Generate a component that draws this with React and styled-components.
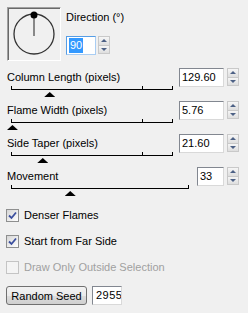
import React from 'react'
import styled, { createGlobalStyle } from 'styled-components'

const GlobalStyle = createGlobalStyle`
  html, body {
    margin: 0;
    padding: 0;
    background: #f0f0f0;
  }
  body {
    font-family: 'Liberation Sans', Arial, sans-serif;
    font-size: 11px;
    color: #000;
  }
`

const Panel = styled.div`
  width: 248px;
  height: 313px;
  box-sizing: border-box;
  padding: 7px 9px 0 7px;
  display: flex;
  flex-direction: column;
  overflow: hidden;
`

const DirectionRow = styled.div`
  display: flex;
  align-items: flex-start;
  gap: 5px;
`

const DialBox = styled.div`
  width: 54px;
  height: 54px;
  box-sizing: border-box;
  border-style: solid;
  border-width: 1px;
  border-color: #a0a0a0 #ffffff #ffffff #a0a0a0;
  box-shadow: inset 1px 1px 0 #696969;
  display: flex;
  align-items: center;
  justify-content: center;
`

const DirectionControls = styled.div`
  display: flex;
  flex-direction: column;
  padding-top: 4px;
`

const Label = styled.div`
  height: 13px;
  line-height: 13px;
  white-space: nowrap;
  color: ${({ $disabled }) => ($disabled ? '#a0a0a0' : '#000')};
`

const SpinGroup = styled.div`
  display: flex;
  align-items: flex-start;
  gap: ${({ $gap }) => $gap || 3}px;
  margin-top: ${({ $offset }) => $offset || 0}px;
`

const NumberBox = styled.div`
  width: ${({ $width }) => $width}px;
  height: 19px;
  box-sizing: border-box;
  background: #fff;
  border: 1px solid;
  border-color: ${({ $focused }) =>
    $focused ? '#569de5 #a9cdf3 #a9cdf3 #569de5' : '#828790 #d9d9d9 #d9d9d9 #828790'};
  padding: 0 0 0 ${({ $indent }) => $indent || 2}px;
  letter-spacing: ${({ $spacing }) => $spacing || 0}px;
  line-height: 17px;
  white-space: nowrap;
  overflow: hidden;
`

const Selection = styled.span`
  display: inline-block;
  background: #3399ff;
  color: #fff;
  line-height: 15px;
  padding: 0 1px;
  margin-top: 1px;
`

const SpinButtons = styled.div`
  width: 12px;
  height: 18px;
  display: flex;
  flex-direction: column;
`

const SpinHalf = styled.div`
  flex: 1;
  box-sizing: border-box;
  border: 1px solid #c9c9c9;
  margin-top: ${({ $down }) => ($down ? '-1px' : '0')};
  background: linear-gradient(#f6f6f6, #dedede);
  display: flex;
  align-items: center;
  justify-content: center;

  &::after {
    content: '';
    width: 0;
    height: 0;
    border-left: 3px solid transparent;
    border-right: 3px solid transparent;
    ${({ $down }) =>
      $down ? 'border-top: 3px solid #4d6185;' : 'border-bottom: 3px solid #4d6185;'}
  }
`

const Spinner = () => (
  <SpinButtons>
    <SpinHalf />
    <SpinHalf $down />
  </SpinButtons>
)

const SliderSection = styled.div`
  display: flex;
  flex-direction: column;
  gap: 7px;
  margin-top: 10px;
`

const SliderRow = styled.div`
  display: flex;
  align-items: flex-start;
`

const SliderBody = styled.div`
  flex: 1;
  display: flex;
  flex-direction: column;
`

const Track = styled.div`
  position: relative;
  height: 13px;
  margin: 0 ${({ $endGap }) => $endGap}px 0 4px;

  &::before {
    content: '';
    position: absolute;
    left: 0;
    right: 0;
    top: 5px;
    height: 1px;
    background: #000;
  }
`

const Tick = styled.div`
  position: absolute;
  top: 2px;
  width: 1px;
  height: 3px;
  background: #000;
`

const Thumb = styled.div`
  position: absolute;
  top: 8px;
  width: 11px;
  height: 5px;
  margin-left: -5px;
  background: #000;
  clip-path: polygon(50% 0, 100% 100%, 0 100%);
`

const Slider = ({ label, value, fraction, ticks, boxWidth, endGap }) => (
  <SliderRow>
    <SliderBody>
      <Label>{label}</Label>
      <Track $endGap={endGap}>
        <Tick style={{ left: 0 }} />
        {ticks.map(t => (
          <Tick key={t} style={{ left: `${t * 100}%` }} />
        ))}
        <Tick style={{ right: 0 }} />
        <Thumb style={{ left: `${fraction * 100}%` }} />
      </Track>
    </SliderBody>
    <SpinGroup $offset={-3}>
      <NumberBox $width={boxWidth}>{value}</NumberBox>
      <Spinner />
    </SpinGroup>
  </SliderRow>
)

const CheckSection = styled.div`
  display: flex;
  flex-direction: column;
  margin-top: 6px;
`

const CheckRow = styled.div`
  height: 26px;
  display: flex;
  align-items: center;
  gap: 5px;
  margin-left: -1px;
`

const Box = styled.div`
  width: 13px;
  height: 13px;
  box-sizing: border-box;
  border: 1px solid ${({ $disabled }) => ($disabled ? '#c4c4c4' : '#8e8f8f')};
  background: ${({ $disabled }) =>
    $disabled ? '#f4f4f4' : 'linear-gradient(135deg, #d6d6d6, #ffffff)'};
  display: flex;
  align-items: center;
  justify-content: center;
`

const Checkbox = ({ label, checked, disabled }) => (
  <CheckRow>
    <Box $disabled={disabled}>
      {checked && (
        <svg width="9" height="9" viewBox="0 0 9 9">
          <path d="M1 4.5 L3.5 7 L8 1.5" fill="none" stroke="#3b4f9e" strokeWidth="1.8" />
        </svg>
      )}
    </Box>
    <Label $disabled={disabled}>{label}</Label>
  </CheckRow>
)

const SeedRow = styled.div`
  display: flex;
  align-items: center;
  gap: 5px;
  margin-top: 6px;
  margin-left: -1px;
`

const Button = styled.button`
  width: 81px;
  height: 19px;
  padding: 0;
  font: inherit;
  color: #000;
  border: 1px solid #707070;
  border-radius: 3px;
  background: linear-gradient(#f2f2f2 0%, #ebebeb 50%, #dddddd 51%, #cfcfcf 100%);
`

const Dial = () => (
  <svg width="52" height="52" viewBox="0 0 52 52">
    <circle cx="26" cy="26" r="20" fill="none" stroke="#333" strokeWidth="1.3" />
    <line x1="26" y1="7" x2="26" y2="28" stroke="#888" strokeWidth="2" />
    <circle cx="26" cy="7" r="3.5" fill="#000" />
  </svg>
)

const App = () => {
  return (
    <Panel>
      <GlobalStyle />
      <DirectionRow>
        <DialBox>
          <Dial />
        </DialBox>
        <DirectionControls>
          <Label>Direction (°)</Label>
          <SpinGroup $gap={2} $offset={12}>
            <NumberBox $width={30} $focused>
              <Selection>90</Selection>
            </NumberBox>
            <Spinner />
          </SpinGroup>
        </DirectionControls>
      </DirectionRow>
      <SliderSection>
        <Slider label="Column Length (pixels)" value="129.60" fraction={0.236} ticks={[0.807]} boxWidth={45} endGap={6} />
        <Slider label="Flame Width (pixels)" value="5.76" fraction={0.006} ticks={[0.807]} boxWidth={45} endGap={6} />
        <Slider label="Side Taper (pixels)" value="21.60" fraction={0.193} ticks={[0.807]} boxWidth={45} endGap={6} />
        <Slider label="Movement" value="33" fraction={0.33} ticks={[]} boxWidth={27} endGap={8} />
      </SliderSection>
      <CheckSection>
        <Checkbox label="Denser Flames" checked />
        <Checkbox label="Start from Far Side" checked />
        <Checkbox label="Draw Only Outside Selection" disabled />
      </CheckSection>
      <SeedRow>
        <Button>Random Seed</Button>
        <NumberBox $width={30} $indent={3} $spacing={0.5}>29554</NumberBox>
      </SeedRow>
    </Panel>
  )
}

export default App
